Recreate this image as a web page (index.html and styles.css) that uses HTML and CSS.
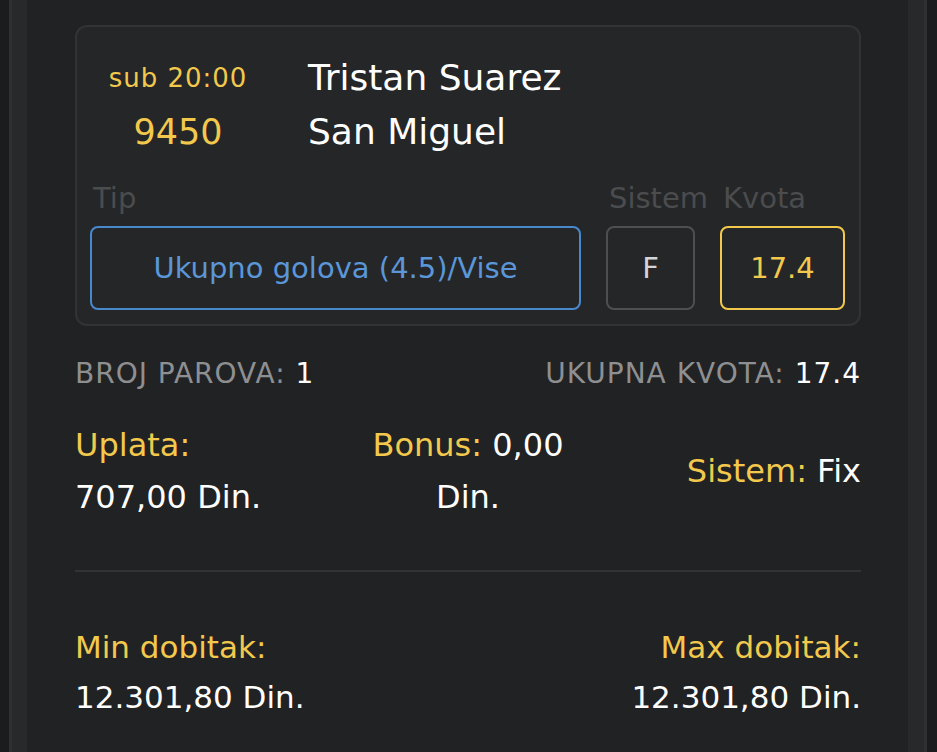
FILE: index.html
```html
<!DOCTYPE html>
<html lang="sr">
<head>
<meta charset="utf-8">
<title>Tiket</title>
<link rel="stylesheet" href="styles.css">
</head>
<body>
<div class="frame">
  <div class="sheet">
    <main class="main">
      <section class="card">
        <div class="match">
          <div class="when">
            <div class="time">sub 20:00</div>
            <div class="code">9450</div>
          </div>
          <div class="teams">
            <div class="team">Tristan Suarez</div>
            <div class="team">San Miguel</div>
          </div>
        </div>
        <div class="picks">
          <div class="pick pick-tip">
            <div class="label">Tip</div>
            <div class="box box-blue">Ukupno golova (4.5)/Vise</div>
          </div>
          <div class="pick pick-sys">
            <div class="label">Sistem</div>
            <div class="box box-gray">F</div>
          </div>
          <div class="pick pick-odd">
            <div class="label">Kvota</div>
            <div class="box box-yellow">17.4</div>
          </div>
        </div>
      </section>

      <div class="summary">
        <div class="sum-item">BROJ PAROVA: <span class="val">1</span></div>
        <div class="sum-item">UKUPNA KVOTA: <span class="val">17.4</span></div>
      </div>

      <div class="amounts">
        <div class="amt amt-left">
          <div class="y">Uplata:</div>
          <div class="w">707,00 Din.</div>
        </div>
        <div class="amt amt-center">
          <span class="y">Bonus:</span> <span class="w">0,00</span><br><span class="w">Din.</span>
        </div>
        <div class="amt amt-right">
          <span class="y">Sistem:</span> <span class="w">Fix</span>
        </div>
      </div>

      <hr class="divider">

      <div class="wins">
        <div class="win">
          <div class="y">Min dobitak:</div>
          <div class="w">12.301,80 Din.</div>
        </div>
        <div class="win win-right">
          <div class="y">Max dobitak:</div>
          <div class="w">12.301,80 Din.</div>
        </div>
      </div>
    </main>
  </div>
</div>
</body>
</html>
```

FILE: styles.css
```css
* { box-sizing: border-box; }
html, body { margin: 0; padding: 0; }
body {
  background: #1b1c1e;
  font-family: "DejaVu Sans", Inter, sans-serif;
  color: #ffffff;
}
.frame {
  height: 752px;
  overflow: hidden;
  padding: 0 10px 0 9px;
}
.sheet {
  height: 100%;
  background: #28292b;
  border-left: 3px solid #2f3032;
  border-right: 3px solid #2f3032;
  padding: 0 16px 0 15px;
}
.main {
  height: 100%;
  background: #212224;
  padding: 25px 47px 0 48px;
}
.card {
  border: 2px solid #323335;
  border-radius: 12px;
  background: #252628;
  padding: 24px 13px 14px 13px;
}
.match {
  display: grid;
  grid-template-columns: 176px 1fr;
  column-gap: 42px;
}
.when { text-align: center; }
.time {
  color: #f2c94c;
  font-size: 26px;
  line-height: 54px;
  letter-spacing: 1px;
}
.code {
  color: #f2c94c;
  font-size: 35px;
  line-height: 54px;
}
.team {
  font-size: 36px;
  line-height: 54px;
  color: #ffffff;
}
.picks {
  display: flex;
  gap: 25px;
  margin-top: 21px;
}
.pick { display: flex; flex-direction: column; }
.pick-tip { width: 491px; }
.pick-sys { width: 89px; }
.pick-odd { width: 125px; }
.label {
  color: #4b4c4e;
  font-size: 29px;
  line-height: 36px;
  height: 36px;
  padding-left: 3px;
  white-space: nowrap;
  margin-bottom: 10px;
}
.box {
  height: 84px;
  border: 2px solid;
  border-radius: 8px;
  display: flex;
  align-items: center;
  justify-content: center;
  font-size: 29px;
}
.box-blue { border-color: #4a88cc; color: #5a96d8; }
.box-gray { border-color: #4e4f51; color: #d4d4d6; }
.box-yellow { border-color: #f2c94c; color: #f2c94c; }

.summary {
  display: flex;
  justify-content: space-between;
  margin-top: 30px;
  font-size: 28px;
  line-height: 36px;
  letter-spacing: 1px;
  color: #8e8f91;
}
.summary .val { color: #ffffff; }

.amounts {
  display: grid;
  grid-template-columns: 1fr 1fr 1fr;
  align-items: center;
  margin-top: 27px;
  font-size: 32px;
  line-height: 52px;
}
.amt-center { text-align: center; }
.amt-right { text-align: right; }
.y { color: #f2c94c; }
.w { color: #ffffff; }

.divider {
  border: 0;
  height: 2px;
  background: #323335;
  margin: 47px 0 0 0;
}
.wins {
  display: flex;
  justify-content: space-between;
  margin-top: 50px;
  font-size: 31px;
  line-height: 50px;
}
.win-right { text-align: right; }
```
